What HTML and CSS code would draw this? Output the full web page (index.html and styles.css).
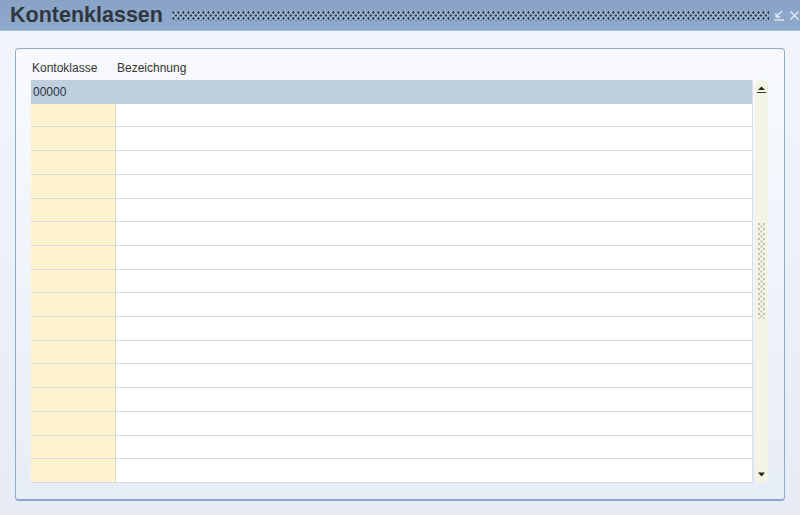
FILE: index.html
```html
<!DOCTYPE html>
<html>
<head>
<meta charset="utf-8">
<link rel="stylesheet" href="styles.css">
</head>
<body>
<div class="window">
  <div class="titlebar">
    <div class="title">Kontenklassen</div>
    <div class="dots"></div>
    <div class="wbtns">
      <svg class="wicon" width="12" height="12" viewBox="0 0 12 12"><path d="M3 8 L9 2 M3 8 L3 4 M3 8 L7 8" stroke="#e8eef6" stroke-width="1.3" fill="none"/><path d="M1 11 H11" stroke="#e8eef6" stroke-width="1.3"/></svg>
      <svg class="wicon" width="11" height="11" viewBox="0 0 11 11"><path d="M1.5 1.5 L9.5 9.5 M9.5 1.5 L1.5 9.5" stroke="#e8eef6" stroke-width="1.4"/></svg>
    </div>
  </div>
  <div class="content">
    <div class="panel">
      <div class="heads">
        <div class="h1">Kontoklasse</div>
        <div class="h2">Bezeichnung</div>
      </div>
      <div class="gridwrap">
        <div class="grid">
          <div class="row sel"><div class="c1">00000</div><div class="c2"></div></div>
          <div class="row"><div class="c1"></div><div class="c2"></div></div>
          <div class="row"><div class="c1"></div><div class="c2"></div></div>
          <div class="row"><div class="c1"></div><div class="c2"></div></div>
          <div class="row"><div class="c1"></div><div class="c2"></div></div>
          <div class="row"><div class="c1"></div><div class="c2"></div></div>
          <div class="row"><div class="c1"></div><div class="c2"></div></div>
          <div class="row"><div class="c1"></div><div class="c2"></div></div>
          <div class="row"><div class="c1"></div><div class="c2"></div></div>
          <div class="row"><div class="c1"></div><div class="c2"></div></div>
          <div class="row"><div class="c1"></div><div class="c2"></div></div>
          <div class="row"><div class="c1"></div><div class="c2"></div></div>
          <div class="row"><div class="c1"></div><div class="c2"></div></div>
          <div class="row"><div class="c1"></div><div class="c2"></div></div>
          <div class="row"><div class="c1"></div><div class="c2"></div></div>
          <div class="row"><div class="c1"></div><div class="c2"></div></div>
          <div class="row last"><div class="c1"></div><div class="c2"></div></div>
        </div>
        <div class="scroll">
          <div class="sbtn up"><svg width="9" height="7" viewBox="0 0 9 7"><path d="M4.5 0.5 L8 4 H1 Z" fill="#222"/><path d="M0 6.5 H9" stroke="#333" stroke-width="1"/></svg></div>
          <div class="track"><div class="grip"></div></div>
          <div class="sbtn down"><svg width="9" height="5" viewBox="0 0 9 5"><path d="M1 0.5 H8 L4.5 4.5 Z" fill="#222"/></svg></div>
        </div>
      </div>
    </div>
  </div>
</div>
</body>
</html>
```
FILE: styles.css
```css
html, body {
  margin: 0;
  padding: 0;
}
body {
  width: 800px;
  height: 515px;
  overflow: hidden;
  font-family: "Liberation Sans", Arial, sans-serif;
}
.window {
  width: 800px;
  height: 515px;
  display: flex;
  flex-direction: column;
  background: linear-gradient(#f3f6fc, #e6ebf5);
}
.titlebar {
  height: 31px;
  flex: none;
  display: flex;
  align-items: center;
  background: linear-gradient(#88a3c6, #8ea9cb);
  border-bottom: 1px solid #a9bdd6;
  box-sizing: border-box;
  padding-left: 10px;
}
.title {
  font-size: 21.5px;
  font-weight: bold;
  color: #30363d;
}
.dots {
  margin-left: 9px;
  width: 598px;
  height: 10px;
  margin-top: 1px;
  background:
    radial-gradient(circle at 1.5px 1.5px, #26313d 0.9px, transparent 1.3px) 0 0 / 5px 6px,
    radial-gradient(circle at 1.5px 1.5px, #26313d 0.9px, transparent 1.3px) 2.5px 3px / 5px 6px,
    radial-gradient(circle at 1.5px 1.5px, #e6edf5 0.7px, transparent 1.1px) 1.5px 0 / 5px 6px,
    radial-gradient(circle at 1.5px 1.5px, #e6edf5 0.7px, transparent 1.1px) 4px 3px / 5px 6px;
}
.wbtns {
  display: flex;
  align-items: center;
  gap: 4px;
  margin-left: 4px;
}
.wicon {
  display: block;
}
.content {
  flex: 1;
  padding: 17px 15px 14px 15px;
  display: flex;
}
.panel {
  flex: 1;
  border: 1px solid #8eaad0;
  border-bottom: 2px solid #8aa5c9;
  border-radius: 4px;
  background: linear-gradient(#f8fafe, #e7edf7);
  padding: 0 15px 15px 15px;
  display: flex;
  flex-direction: column;
}
.heads {
  height: 31px;
  display: flex;
  align-items: center;
  font-size: 12px;
  color: #333;
  padding-top: 7px;
  box-sizing: border-box;
}
.h1 {
  width: 85px;
  padding-left: 1px;
}
.gridwrap {
  display: flex;
  gap: 2px;
  height: 403px;
}
.grid {
  width: 722px;
  display: grid;
  grid-template-rows: repeat(17, 1fr);
  border-right: 1px solid #d9dde6;
  box-sizing: border-box;
}
.row {
  display: flex;
  border-bottom: 1px solid #d6d9de;
}
.row.sel {
  background: #bfcfde;
  border-bottom: none;
}
.c1 {
  width: 85px;
  flex: none;
  background: #fff2cd;
  border-right: 1px solid #e3dcc2;
  box-sizing: border-box;
}
.c2 {
  flex: 1;
  background: #fff;
}
.row.sel .c1, .row.sel .c2 {
  background: transparent;
  border-right: none;
}
.row.sel .c1 {
  font-size: 12px;
  color: #2c3440;
  display: flex;
  align-items: center;
  padding-left: 2px;
}
.scroll {
  width: 13px;
  display: flex;
  flex-direction: column;
  background: #f4f4e4;
  border-radius: 6px;
}
.sbtn {
  height: 14px;
  display: flex;
  align-items: center;
  justify-content: center;
}
.sbtn.up {
  padding-top: 2px;
}
.sbtn.down {
  padding-bottom: 2px;
}
.track {
  flex: 1;
  display: flex;
  align-items: center;
  justify-content: center;
}
.grip {
  width: 7px;
  height: 96px;
  margin-top: -22px;
  background:
    radial-gradient(circle at 1px 1px, #bdbfac 0.7px, transparent 1.1px) 0 0 / 5px 5px,
    radial-gradient(circle at 1px 1px, #bdbfac 0.7px, transparent 1.1px) 2.5px 2.5px / 5px 5px;
}
```
